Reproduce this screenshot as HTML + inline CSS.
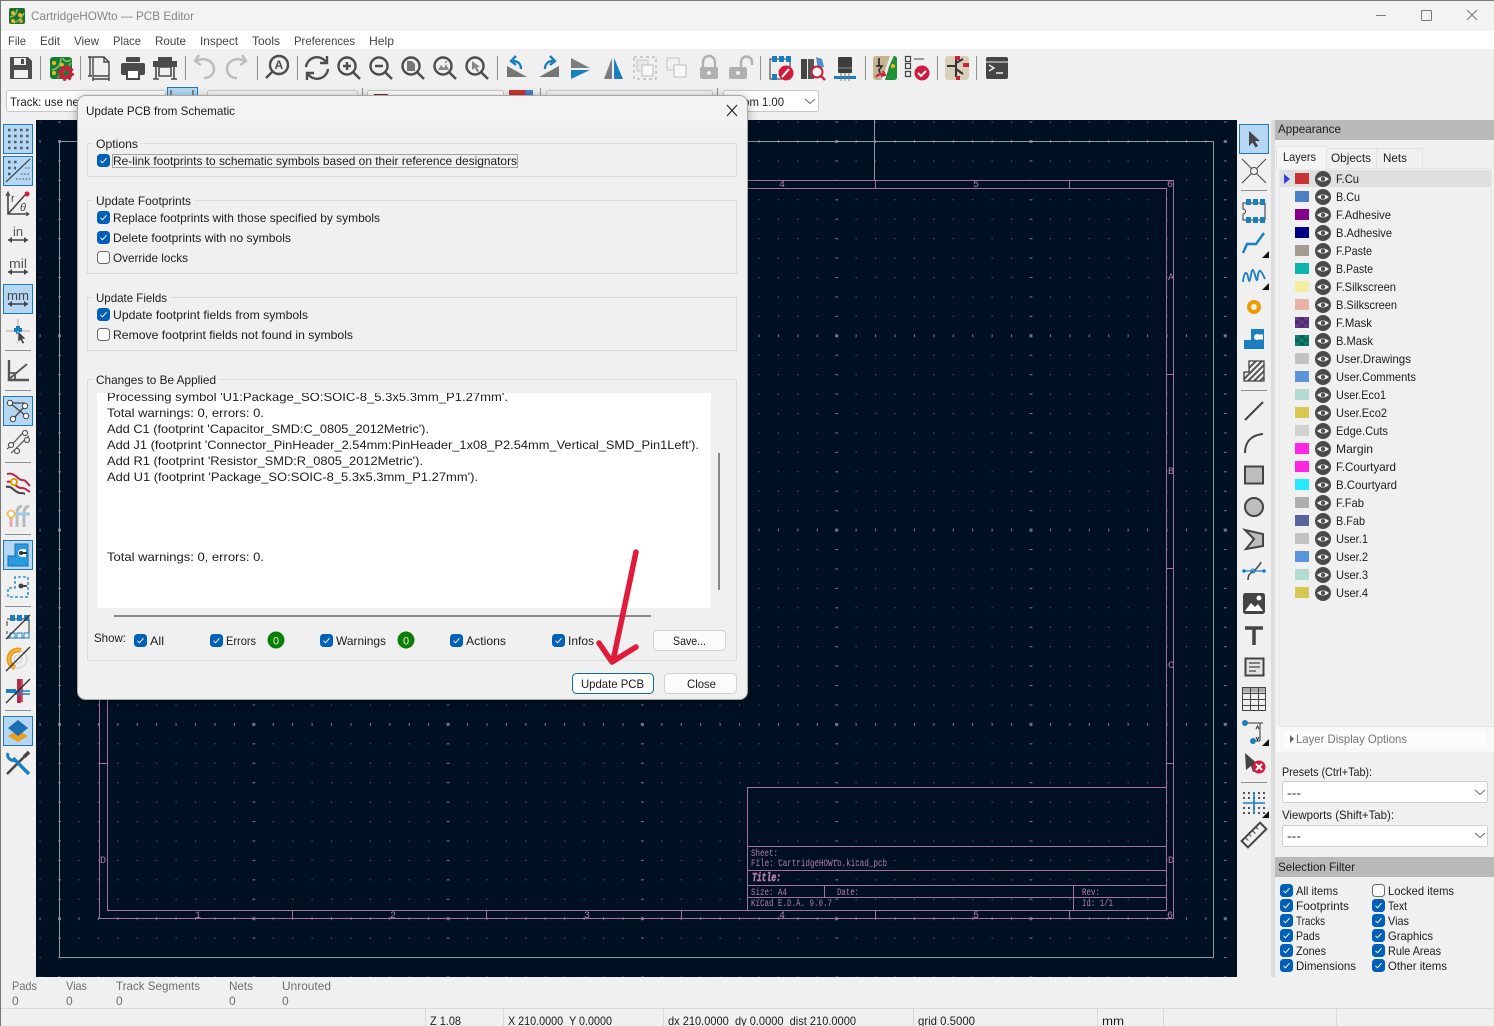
<!DOCTYPE html>
<html><head><meta charset="utf-8"><title>CartridgeHOWto — PCB Editor</title>
<style>
html,body{margin:0;padding:0;background:#f0f0f0;overflow:hidden}
svg{display:block}
text{font-family:"Liberation Sans",sans-serif;font-size:12px;fill:#1c1c1c}
.g{fill:#6e6e6e}
.m{font-family:"Liberation Mono",monospace;font-size:10px;fill:#b07fa8}
.d{fill:none;stroke:#4d4d4d;stroke-width:2.4}
.b{fill:none;stroke:#1a7fc1;stroke-width:2.4}
.a{fill:#b5d7f3;stroke:#1f77b4}
.s{stroke:#8f8f8f;stroke-width:1}
</style></head><body>
<svg width="1494" height="1026" viewBox="0 0 1494 1026" xmlns="http://www.w3.org/2000/svg">
<defs>
<pattern id="p0" x="20.14" y="121.57" width="19.43" height="19.43" patternUnits="userSpaceOnUse"><rect width="1" height="1" fill="#6b7583"/></pattern>
<pattern id="p1" x="58" y="121.57" width="194.3" height="19.43" patternUnits="userSpaceOnUse"><rect width="3" height="1" fill="#6b7583"/></pattern>
<pattern id="p2" x="20.14" y="140" width="19.43" height="194.3" patternUnits="userSpaceOnUse"><rect width="1" height="3" fill="#6b7583"/></pattern>
<pattern id="p3" x="58" y="140" width="194.3" height="194.3" patternUnits="userSpaceOnUse"><rect width="3" height="3" fill="#6b7583"/></pattern>
<pattern id="fm" x="1295" y="317" width="9" height="7" patternUnits="userSpaceOnUse"><rect width="9" height="7" fill="#4d2a70"/><rect width="4.500" height="3.500" fill="#633c8a"/><rect x="4.500" y="3.500" width="4.500" height="3.500" fill="#633c8a"/></pattern>
<pattern id="bm" x="1295" y="335" width="9" height="7" patternUnits="userSpaceOnUse"><rect width="9" height="7" fill="#0a6258"/><rect width="4.500" height="3.500" fill="#0f7d6e"/><rect x="4.500" y="3.500" width="4.500" height="3.500" fill="#0f7d6e"/></pattern>
<g id="cb"><rect x=".5" y=".5" width="12" height="12" rx="3" fill="#005fb8" stroke="#005fb8"/><path d="M3.5 6.8l2 2 4-4.6" fill="none" stroke="#fff"/></g>
<g id="cu"><rect x=".5" y=".5" width="12" height="12" rx="3" fill="#fbfbfb" stroke="#6a6a6a"/></g>
<g id="eye"><circle r="8" fill="#4a4a4a"/><path d="M-6 0Q0-5 6 0Q0 5-6 0z" fill="#eee"/><circle r="2" fill="#4a4a4a"/></g>
<g id="chev"><path d="M0 0l5 4.5 5-4.500" fill="none" stroke="#666"/></g>
<g id="tri"><path d="M0 7L7 0V7z" fill="#111"/></g>
<filter id="sh" x="-5%" y="-5%" width="110%" height="110%"><feDropShadow dx="0" dy="2" stdDeviation="5" flood-color="#000" flood-opacity=".35"/></filter>
<clipPath id="cv"><rect x="36" y="120" width="1201" height="857"/></clipPath>
<clipPath id="lg"><rect x="97" y="393" width="614" height="215"/></clipPath>
</defs>

<rect width="1494" height="1026" fill="#f0f0f0"/>
<rect width="1494" height="31" fill="#f3f3f3"/>
<rect y="31" width="1494" height="18" fill="#fff"/>
<rect width="1494" height="1" fill="#777"/>
<rect width="1" height="1026" fill="#777"/>

<!-- title -->
<g transform="translate(9,8)"><rect width="16" height="16" rx="2" fill="#1d6f30"/><path d="M1 9C6 8 8 5 8 1M5 15C9 13 13 10 15 5" fill="none" stroke="#7fc06a" stroke-width="1.5"/><circle cx="4" cy="5" r="2" fill="#e8b820"/><circle cx="4" cy="13" r="2" fill="#e8b820"/><circle cx="11" cy="7" r="2" fill="#e8b820"/><circle cx="12" cy="13" r="2" fill="#d8a020"/></g>
<text x="31" y="20" style="fill:#858585" textLength="163" lengthAdjust="spacingAndGlyphs">CartridgeHOWto — PCB Editor</text>
<path d="M1376 15.5h10" stroke="#777"/><rect x="1421.500" y="10.500" width="10" height="10" rx="1" fill="none" stroke="#777"/><path d="M1467 10l10 10M1477 10l-10 10" stroke="#777"/>

<!-- menu -->
<g>
<text x="8" y="45" textLength="18" lengthAdjust="spacingAndGlyphs" style="fill:#444">File</text>
<text x="40" y="45" textLength="20" lengthAdjust="spacingAndGlyphs" style="fill:#444">Edit</text>
<text x="74" y="45" textLength="25" lengthAdjust="spacingAndGlyphs" style="fill:#444">View</text>
<text x="113" y="45" textLength="28" lengthAdjust="spacingAndGlyphs" style="fill:#444">Place</text>
<text x="155" y="45" textLength="31" lengthAdjust="spacingAndGlyphs" style="fill:#444">Route</text>
<text x="200" y="45" textLength="38" lengthAdjust="spacingAndGlyphs" style="fill:#444">Inspect</text>
<text x="252" y="45" textLength="28" lengthAdjust="spacingAndGlyphs" style="fill:#444">Tools</text>
<text x="294" y="45" textLength="61" lengthAdjust="spacingAndGlyphs" style="fill:#444">Preferences</text>
<text x="369" y="45" textLength="25" lengthAdjust="spacingAndGlyphs" style="fill:#444">Help</text>
</g>

<!-- top toolbar separators -->
<path class="s" d="M40.500 56v24M80.500 56v24M185.500 56v24M257.500 56v24M297.500 56v24M497.500 56v24M760.500 56v24M865.500 56v24M937.500 56v24M976.500 56v24"/>

<!-- top toolbar icons -->
<g transform="translate(21,68)"><path d="M-11-11h18l4 4v18h-22z" fill="#4d4d4d"/><rect x="-7" y="-10" width="12" height="7" fill="#f0f0f0"/><rect x="0" y="-9" width="3" height="5" fill="#4d4d4d"/><rect x="-7" y="2" width="14" height="8" fill="#f0f0f0"/></g>
<g transform="translate(61,68)"><rect x="-11" y="-11" width="22" height="22" rx="3" fill="#1d7a33"/><path d="M-9 2C-3 1 0-4 0-10M-3 10C0 5 6 0 10-5M2-10C3-6 6-6 10-8" fill="none" stroke="#7fc06a" stroke-width="1.6"/><circle cx="-7" cy="-5" r="2" fill="#e8c020"/><circle cx="-7" cy="5" r="2" fill="#e8c020"/><circle cx="1" cy="-3" r="2" fill="#e8c020"/><circle cx="5" cy="5" r="4.5" fill="none" stroke="#c9203c" stroke-width="3.5"/><circle cx="5" cy="5" r="7" fill="none" stroke="#c9203c" stroke-width="2" stroke-dasharray="3 2.500"/></g>
<g transform="translate(99,68)" fill="none" stroke="#444" stroke-width="1.4"><path d="M-6-11h11l5 5v14h-16zM5-11v5h5M-9-11v19M-11-11h4M-11 8h4M-6 11h16M-6 9v4M10 9v4"/></g>
<g transform="translate(133,68)"><rect x="-12" y="-5" width="24" height="12" rx="2" fill="#4a4a4a"/><rect x="-7" y="-11" width="14" height="5" rx="1" fill="#4a4a4a"/><path d="M-6 2h12v9h-12z" fill="#fff" stroke="#4a4a4a" stroke-width="2"/></g>
<g transform="translate(165,68)"><rect x="-12" y="-7" width="24" height="6" fill="#4a4a4a"/><rect x="-7" y="-11" width="14" height="4" fill="#4a4a4a"/><path d="M-6-1h12v9h-12zM-9-1v12M9-1v12M-12 11h6M6 11h6" fill="#f0f0f0" stroke="#4a4a4a" stroke-width="1.6"/></g>
<g transform="translate(204,68)" fill="none" stroke="#bdbdbd" stroke-width="2.500"><path d="M-8-7C2-12 10-6 10 1C10 7 5 10 0 10"/><path d="M-5-13L-9-7L-3-3"/></g>
<g transform="translate(237,68) scale(-1,1)" fill="none" stroke="#bdbdbd" stroke-width="2.500"><path d="M-8-7C2-12 10-6 10 1C10 7 5 10 0 10"/><path d="M-5-13L-9-7L-3-3"/></g>
<g transform="translate(277,68)"><circle cx="2" cy="-3" r="9" class="d"/><path class="d" d="M-4 3L-11 10"/><text x="-2.500" y="1" style="font-size:12px;font-weight:bold;fill:#4d4d4d">A</text></g>
<g transform="translate(317,68)" class="d"><path d="M-11-1A11 11 0 0 1 9-6"/><path d="M10-12v7h-7"/><path d="M11 1A11 11 0 0 1-9 6"/><path d="M-10 12v-7h7"/></g>
<g transform="translate(349,68)" class="d"><circle cx="-2" cy="-2" r="8.500"/><path d="M4 4l7 7M-6-2h8M-2-6v8"/></g>
<g transform="translate(381,68)" class="d"><circle cx="-2" cy="-2" r="8.500"/><path d="M4 4l7 7M-6-2h8"/></g>
<g transform="translate(413,68)"><circle cx="-2" cy="-2" r="8.500" class="d"/><path class="d" d="M4 4l7 7"/><path d="M-6-7h5l3 3v7h-8z" fill="#777"/></g>
<g transform="translate(445,68)"><circle cx="-2" cy="-2" r="8.500" class="d"/><path class="d" d="M4 4l7 7"/><path d="M-7 2l3-5 3 3 2-4 3 6z" fill="#888"/><circle cx="1" cy="-6" r="1" fill="#888"/></g>
<g transform="translate(477,68)"><circle cx="-2" cy="-2" r="8.500" class="d"/><path class="d" d="M4 4l7 7"/><path d="M-5-7l8 6h-3l2 4-2 1-2-4-3 2z" fill="#888"/></g>
<g transform="translate(517,68)"><path d="M-10 9L10 9L-10-2z" fill="#757575"/><path class="b" d="M4 1C4-5 0-7-4-7M-1-12L-6-7L-1-3"/></g>
<g transform="translate(549,68)"><path d="M10 9L-10 9L10-2z" fill="#757575"/><path class="b" d="M-4 1C-4-5 0-7 4-7M1-12L6-7L1-3"/></g>
<g transform="translate(580,68)"><path d="M-9-10L10 0L-9 0z" fill="#7d7d7d"/><path d="M-9 2L10 2L-9 11z" fill="#1a7fc1"/></g>
<g transform="translate(613,68)"><path d="M-9 11L-1 11L-1-10z" fill="#7d7d7d"/><path d="M1-10L1 11L10 11z" fill="#1a7fc1"/></g>
<g transform="translate(645,68)" fill="none"><rect x="-11" y="-11" width="22" height="22" stroke="#bdbdbd" stroke-width="1.500" stroke-dasharray="3 3"/><rect x="-8" y="-8" width="11" height="11" fill="#e8e8e8" stroke="#c4c4c4"/><rect x="-3" y="-3" width="11" height="11" fill="#f8f8f8" stroke="#bdbdbd"/></g>
<g transform="translate(677,68)" fill="none"><rect x="-10" y="-10" width="12" height="12" stroke="#c4c4c4"/><rect x="-3" y="-3" width="12" height="12" fill="#f8f8f8" stroke="#bdbdbd"/><path d="M-10-10h.1M2-10h.1M-10 2h.1M9 9h.1M9-3h.1M-3 9h.1" stroke="#bdbdbd" stroke-width="3"/></g>
<g transform="translate(709,68)"><rect x="-9" y="-1" width="18" height="12" rx="2" fill="#b0b0b0"/><path d="M-6-1v-5a6 6 0 0 1 12 0v5" fill="none" stroke="#b0b0b0" stroke-width="2.400"/><circle cy="5" r="2" fill="#f0f0f0"/></g>
<g transform="translate(741,68)"><rect x="-12" y="-1" width="18" height="12" rx="2" fill="#b0b0b0"/><path d="M0-1v-5a5.500 5.500 0 0 1 11 0v3" fill="none" stroke="#b0b0b0" stroke-width="2.400"/><circle cx="-3" cy="5" r="2" fill="#f0f0f0"/></g>
<g transform="translate(781,68)"><path d="M-11-9h20v20h-20zM-11-2v4" fill="none" stroke="#333"/><rect x="-9" y="-12" width="5" height="6" fill="#1a7fc1"/><rect x="-2" y="-12" width="5" height="6" fill="#1a7fc1"/><rect x="5" y="-12" width="5" height="6" fill="#1a7fc1"/><rect x="-9" y="6" width="5" height="6" fill="#1a7fc1"/><circle cx="5" cy="5" r="7.500" fill="#d01c3c"/><path d="M1 9l7-8" stroke="#fff" stroke-width="2"/></g>
<g transform="translate(813,68)"><rect x="-12" y="-9" width="6" height="20" fill="#444"/><rect x="-5" y="-9" width="6" height="20" fill="#555"/><path d="M3-11l6 2 2 8-6 2z" fill="#4a8fd0"/><circle cx="4" cy="4" r="5.500" fill="#f8f8f8" stroke="#c9203c" stroke-width="2"/><path d="M8 8l4 4" stroke="#c9203c" stroke-width="2.400"/></g>
<g transform="translate(845,68)"><rect x="-7" y="-11" width="14" height="16" rx="1" fill="#3d3d3d"/><rect x="-7" y="-1" width="14" height="2" fill="#666"/><rect x="-11" y="8" width="22" height="3" fill="#1a7fc1"/><path d="M-4 5v8M0 5v8M4 5v8" stroke="#777"/></g>
<g transform="translate(885,68)"><path d="M-12-9q0-3 3-3h14L-3 12h-6q-3 0-3-3z" fill="#c6b592"/><path d="M7-12h2q3 0 3 3V9q0 3-3 3H0z" fill="#229135"/><path d="M-6-10v8M-9-2h6l-3 4 1 3" fill="none" stroke="#333" stroke-width="1.800"/><path d="M8-12L-3 12" stroke="#eee" stroke-width="1.500"/><circle cx="8" cy="-2" r="2" fill="#e8c020"/><path d="M-9 9a6 5 0 0 1 9-2M-2 3l2 4-4 1" fill="none" stroke="#c9203c" stroke-width="2"/></g>
<g transform="translate(917,68)"><path d="M-11.500-11.500h5v5h-5zM-11.500-4.500h5v5h-5zM-11.500 3.500h5v5h-5z" fill="none" stroke="#444" stroke-width="1.200"/><path d="M-3-9h10" stroke="#444"/><circle cx="5" cy="5" r="7.500" fill="#d01c3c"/><path d="M1 5l3 3 5-5" fill="none" stroke="#fff" stroke-width="2"/></g>
<g transform="translate(957,68)"><rect x="-12" y="-12" width="24" height="24" rx="3" fill="#d8cfb8"/><path d="M-1-9V9M-1-2L-10-2M-1-5L6-9M-1 1L6 6" stroke="#333" stroke-width="2" fill="none"/><rect x="-2" y="-12" width="5" height="4" fill="#c9203c"/><rect x="6" y="-5" width="6" height="4" fill="#c9203c"/><rect x="-1" y="8" width="4" height="4" fill="#c9203c"/></g>
<g transform="translate(997,68)"><rect x="-11" y="-11" width="22" height="22" rx="2" fill="#454545"/><path d="M-11-6h22" stroke="#f0f0f0"/><path d="M-7-8.500h.1M-4.500-8.500h.1M-2-8.500h.1" stroke="#f0f0f0" stroke-width="1.500"/><path d="M-8-3l5 3-5 3M-1 5h7" fill="none" stroke="#f0f0f0" stroke-width="1.400"/></g>

<!-- aux toolbar -->
<rect x="6.500" y="90.500" width="159" height="21" rx="2" fill="#fff" stroke="#c8c8c8"/>
<text x="10" y="106" textLength="128" lengthAdjust="spacingAndGlyphs">Track: use netclass width</text>
<rect x="167.500" y="87.500" width="30" height="26" class="a"/>
<path d="M171 90v6M193 90v6" stroke="#333"/>
<rect x="207.500" y="90.500" width="150" height="21" rx="2" fill="#f5f5f5" stroke="#c8c8c8"/>
<path class="s" d="M362.500 88v24"/>
<rect x="367.500" y="90.500" width="136" height="21" rx="2" fill="#fff" stroke="#c8c8c8"/>
<rect x="374" y="94" width="14" height="12" fill="#7a3030"/>
<rect x="509" y="90" width="24" height="20" fill="#c83434"/><path d="M526 90h7v20h-13z" fill="#4d7fc4"/>
<path class="s" d="M540.500 88v24"/>
<rect x="546.500" y="90.500" width="166" height="21" rx="2" fill="#f5f5f5" stroke="#c8c8c8"/>
<path class="s" d="M717.500 88v24"/>
<rect x="723.500" y="90.500" width="95" height="21" rx="2" fill="#fff" stroke="#c8c8c8"/>
<text x="730" y="106" textLength="54" lengthAdjust="spacingAndGlyphs">Zoom 1.00</text>
<use href="#chev" x="805" y="99"/>

<!-- canvas -->
<g clip-path="url(#cv)" shape-rendering="crispEdges">
<rect x="36" y="120" width="1201" height="857" fill="#001023"/>
<rect x="36" y="120" width="1201" height="857" fill="url(#p0)"/>
<rect x="36" y="120" width="1201" height="857" fill="url(#p1)"/>
<rect x="36" y="120" width="1201" height="857" fill="url(#p2)"/>
<rect x="36" y="120" width="1201" height="857" fill="url(#p3)"/>
<g fill="none" stroke="#8c979e">
<rect x="59.500" y="141.500" width="1154" height="816"/>
<path d="M874.500 120v60"/>
</g>
<g fill="none" stroke="#a8709f">
<rect x="99.500" y="180.500" width="1074" height="738"/>
<rect x="107.500" y="188.500" width="1059" height="722"/>
<path d="M875.500 180v8M1069.500 180v8M292.500 911v8M486.500 911v8M681.500 911v8M875.500 911v8M1069.500 911v8M99 374.500h8M99 568.500h8M99 763.500h8M1167 374.500h7M1167 568.500h7M1167 763.500h7"/>
<path d="M747.500 787v124M747 787.500h420M747 846.500h420M747 870.500h420M747 885.500h420M747 897.500h420M824.500 885v12M1073.500 885v26"/>
</g>
</g>
<text class="m" x="779" y="187">4</text><text class="m" x="973" y="187">5</text><text class="m" x="1167" y="187">6</text>
<text class="m" x="195" y="918">1</text><text class="m" x="390" y="918">2</text><text class="m" x="584" y="918">3</text><text class="m" x="779" y="918">4</text><text class="m" x="973" y="918">5</text><text class="m" x="1167" y="918">6</text>
<text class="m" x="1168" y="280">A</text><text class="m" x="1168" y="474">B</text><text class="m" x="1168" y="668">C</text><text class="m" x="1168" y="863">D</text><text class="m" x="100" y="863">D</text>
<text class="m" x="751" y="856" textLength="27" lengthAdjust="spacingAndGlyphs">Sheet:</text>
<text class="m" x="751" y="866" textLength="136" lengthAdjust="spacingAndGlyphs">File: CartridgeHOWto.kicad_pcb</text>
<text class="m" x="752" y="881" textLength="29" lengthAdjust="spacingAndGlyphs" style="font-weight:bold;font-style:italic;font-size:12px;stroke:#b07fa8;stroke-width:.6">Title:</text>
<text class="m" x="751" y="895" textLength="36" lengthAdjust="spacingAndGlyphs">Size: A4</text>
<text class="m" x="837" y="895" textLength="22" lengthAdjust="spacingAndGlyphs">Date:</text>
<text class="m" x="1082" y="895" textLength="18" lengthAdjust="spacingAndGlyphs">Rev:</text>
<text class="m" x="751" y="906" textLength="81" lengthAdjust="spacingAndGlyphs">KiCad E.D.A. 9.0.7</text>
<text class="m" x="1082" y="906" textLength="31" lengthAdjust="spacingAndGlyphs">Id: 1/1</text>

<!-- left toolbar -->
<path class="s" d="M5 350.500h26M5 390.500h26M5 462.500h26M5 534.500h26M5 606.500h26M5 710.500h26"/>
<rect x="3.500" y="124.500" width="29" height="29" class="a"/>
<rect x="3.500" y="156.500" width="29" height="29" class="a"/>
<rect x="3.500" y="284.500" width="29" height="29" class="a"/>
<rect x="3.500" y="396.500" width="29" height="29" class="a"/>
<rect x="3.500" y="540.500" width="29" height="29" class="a"/>
<rect x="3.500" y="716.500" width="29" height="29" class="a"/>
<g transform="translate(18,139)" stroke="#4d5d6b" stroke-width="2.600" stroke-dasharray="2.600 3.400" fill="none"><path d="M-10-9h22M-10-3h22M-10 3h22M-10 9h22"/></g>
<g transform="translate(18,171)" fill="none"><path d="M-10-9h12M-10-3h8M-10 3h3" stroke="#4d5d6b" stroke-width="2.600" stroke-dasharray="2.600 3.400"/><path d="M7-3h5M3 3h9M-2 8h14" stroke="#6a7a88" stroke-width="1.600" stroke-dasharray="1.600 1.600"/><path d="M-12 11L12-12" stroke="#333" stroke-width="1.200"/></g>
<g transform="translate(18,203)"><path d="M-10-10v21h21M-10 11L7-8" fill="none" stroke="#444" stroke-width="1.600"/><path d="M-12-7l2-4 2 4M8 9l3 2-3 2" fill="none" stroke="#444"/><circle cx="9" cy="-9" r="2.500" fill="#d01c3c"/><text x="-7" y="-1" style="font-size:11px;fill:#444">r</text><text x="2" y="8" style="font-size:11px;font-style:italic;fill:#444">θ</text></g>
<g transform="translate(18,235)"><text x="-5" y="1" style="font-size:13px;fill:#555">in</text><path d="M-10 5h20" stroke="#444" stroke-width="1.500"/><path d="M-10 5l4-3v6zM10 5l-4-3v6z" fill="#444"/></g>
<g transform="translate(18,267)"><text x="-9" y="1" textLength="18" lengthAdjust="spacingAndGlyphs" style="font-size:13px;fill:#555">mil</text><path d="M-10 5h20" stroke="#444" stroke-width="1.500"/><path d="M-10 5l4-3v6zM10 5l-4-3v6z" fill="#444"/></g>
<g transform="translate(18,299)"><text x="-11" y="1" textLength="22" lengthAdjust="spacingAndGlyphs" style="font-size:13px;fill:#444">mm</text><path d="M-10 5h20" stroke="#444" stroke-width="1.500"/><path d="M-10 5l4-3v6zM10 5l-4-3v6z" fill="#444"/></g>
<g transform="translate(18,331)"><path d="M-12 0H12M0-12V12" stroke="#aaa"/><path d="M-4-1h8M0-5v8" stroke="#1a7fc1" stroke-width="4"/><path d="M0 0l8 8h-3.500l2 4-2 1-2-4-2.500 2z" fill="#444" stroke="#fff" stroke-width=".5"/></g>
<g transform="translate(18,371)"><path d="M-9-11V9H11" fill="none" stroke="#555" stroke-width="2.400"/><path d="M-10 9L9-7M-9 2h6v7" fill="none" stroke="#555" stroke-width="1.800"/></g>
<g transform="translate(18,411)" fill="none" stroke="#444"><path d="M-8-8L8 5M8-6L-5 8M-6-8h13" stroke-width="1.300"/><circle cx="-8" cy="-8" r="2.700" fill="#fff"/><circle cx="8" cy="5" r="2.700" fill="#fff"/><circle cx="-5" cy="8" r="2.700" fill="#fff"/><circle cx="7" cy="-5" r="2.700" fill="#fff"/></g>
<g transform="translate(18,443)" fill="none" stroke="#555" stroke-width="1.200"><path d="M-11 6C-5 2 0-6 5-10M-7 10C-2 6 5-2 11-7"/><circle cx="-7" cy="2" r="2.500" fill="#fff"/><circle cx="7" cy="-10" r="2.500" fill="#fff"/><circle cx="9" cy="-3" r="2.500" fill="#fff"/><circle cx="-1" cy="8" r="2.500" fill="#fff"/></g>
<g transform="translate(18,483)" fill="none" stroke-width="2"><path d="M-11-9C-3-11 0-3 4-3S8-1 12 3" stroke="#b8284a"/><path d="M-11-1C-5-3-2 5 3 5S8 7 12 9" stroke="#b8284a"/><path d="M-12 4C-6 2-3 10 2 10S6 11 7 11" stroke="#444"/><circle cx="-4" cy="-1" r="3" stroke="#e89a10" fill="#fff"/></g>
<g transform="translate(18,515)" fill="none" stroke-width="3"><path d="M-7 12V2" stroke="#e6a8b0"/><path d="M-1 12V-2q0-6 5-7" stroke="#bbb"/><path d="M6 12V-2q0-6 5-7" stroke="#bbb"/><path d="M-6-1H12" stroke="#9ccae8"/><circle cx="-7" cy="-1" r="3.500" stroke="#f0bd60" stroke-width="2" fill="#fff"/></g>
<g transform="translate(18,555)"><path d="M-10 11V1h7V-11H10V11z" fill="#2a9adf" stroke="#1a6fa5" stroke-width="1"/><path d="M8-6H4a4 4 0 0 0 0 8h4z" fill="#f0f8ff"/><path d="M9-2H3" stroke="#333" stroke-width="2"/><circle cx="3" cy="-2" r="2" fill="#333"/></g>
<g transform="translate(18,587)" fill="none"><path d="M-10 10V1h7V-10H10V10z" stroke="#1a7fc1" stroke-width="1.300" stroke-dasharray="3 2"/><path d="M3-1h6" stroke="#444" stroke-width="2"/><circle cx="3" cy="-1" r="2.500" fill="#444"/></g>
<g transform="translate(18,627)"><path d="M-11-6v5M-11 7v-3M-11-8H11V11H-11" fill="none" stroke="#333"/><rect x="-8" y="-12" width="5" height="6" fill="#1a7fc1"/><rect x="-1" y="-12" width="5" height="6" fill="#1a7fc1"/><rect x="6" y="-12" width="5" height="6" fill="#1a7fc1"/><path d="M-8 6h5v5h-5zM-1 6h5v5h-5zM6 6h5v5h-5z" fill="#f0f0f0" stroke="#1a7fc1"/><path d="M-12 12L12-12" stroke="#333" stroke-width="1.300"/></g>
<g transform="translate(18,659)" fill="none"><circle r="9" stroke="#f09c00" stroke-width="5" stroke-dasharray="28 28" transform="rotate(110)"/><circle r="9" stroke="#ccc" stroke-width="1"/><circle r="4" stroke="#ccc"/><path d="M-12 12L12-12" stroke="#333" stroke-width="1.300"/></g>
<g transform="translate(18,691)"><path d="M4-12V11" stroke="#c9203c" stroke-width="1.500"/><rect x="-1" y="-12" width="4" height="24" fill="#b8284a"/><path d="M-4 0H12M-4 3H12" stroke="#1a7fc1" stroke-width="1.500"/><rect x="-12" y="-2" width="10" height="4" fill="#1a7fc1"/><path d="M-12 12L12-12" stroke="#333" stroke-width="1.300"/></g>
<g transform="translate(18,731)"><path d="M0-1L10 5 0 11-10 5z" fill="#e8a020"/><path d="M0-11L10-3 0 5-10-3z" fill="#1a6fb0"/></g>
<g transform="translate(18,763)"><path d="M-11 11L6-6" stroke="#444" stroke-width="2.500"/><path d="M6-6l5-5" stroke="#444" stroke-width="3.500"/><path d="M11 11L-5-5" stroke="#1a7fc1" stroke-width="3.500"/><path d="M-10-10a5.500 5.500 0 0 0 7 7" fill="none" stroke="#1a7fc1" stroke-width="3"/></g>

<!-- right toolbar -->
<path class="s" d="M1241 190.500h26M1241 390.500h26M1241 782.500h26"/>
<rect x="1239.500" y="124.500" width="29" height="29" class="a"/>
<g transform="translate(1254,139)"><path d="M-5-8L6 2H1l3 5-2.500 1.500-3-5L-5 7z" fill="#444"/></g>
<g transform="translate(1254,171)" fill="none" stroke="#444"><path d="M-12-12L12 12M12-12L-12 12"/><circle r="3.500" fill="#f0f0f0"/></g>
<g transform="translate(1254,211)"><path d="M-11-8H11V9H-11V3a2 2 0 0 0 0-5z" fill="none" stroke="#333"/><path d="M-8-12h5v6h-5zM-1-12h5v6h-5zM6-12h5v6h-5zM-8 6h5v6h-5zM-1 6h5v6h-5zM6 6h5v6h-5z" fill="#1a7fc1"/></g>
<g transform="translate(1254,243)"><path d="M-11 10l4-9h9l8-11" class="b"/></g><use href="#tri" x="1262" y="251"/>
<g transform="translate(1254,275)"><path d="M-11 7C-10-4-7-4-6 2S-4 7-3 0-1-7 1 0 3 7 4 0 7-5 11 4" fill="none" stroke="#1a7fc1" stroke-width="1.800"/></g><use href="#tri" x="1262" y="283"/>
<g transform="translate(1254,307)"><circle r="5" fill="none" stroke="#f09c00" stroke-width="4"/></g>
<g transform="translate(1254,339)"><path d="M-10 10V1h7V-10H10V10z" fill="#1a7fc1"/><path d="M9-2H3" stroke="#fff" stroke-width="5"/><circle cx="3" cy="-2" r="3" fill="#fff"/></g>
<g transform="translate(1254,371)"><clipPath id="zc"><path d="M-10 10V1h5V-10H10V10z"/></clipPath><g clip-path="url(#zc)"><path d="M-12 4L4-12M-12 10L10-12M-7 11L12-8M-1 11L12-2M5 11L12 4" stroke="#555" stroke-width="2"/></g><path d="M-10 10V1h5V-10H10V10z" fill="none" stroke="#444" stroke-width="1.300"/></g>
<g transform="translate(1254,411)"><path d="M-9 9L9-9" stroke="#444" stroke-width="2"/></g>
<g transform="translate(1254,443)"><path d="M-9 10C-9-1-3-8 9-9" fill="none" stroke="#444" stroke-width="2"/></g>
<rect x="1245" y="466.500" width="18" height="17" fill="#bdbdbd" stroke="#444" stroke-width="2"/>
<circle cx="1254" cy="507" r="9" fill="#bdbdbd" stroke="#444" stroke-width="2"/>
<path d="M1245 530L1263 534V546L1246 549L1254 539z" fill="#bdbdbd" stroke="#444" stroke-width="2"/>
<g transform="translate(1254,571)"><path d="M-6 9C-6 1-1 2 2-2S6-6 7-9" fill="none" stroke="#444" stroke-width="1.500"/><path d="M-11 0H11" stroke="#1a7fc1" stroke-width="1.200"/><circle cx="-10" cy="0" r="1.800" fill="#1a7fc1"/><circle cx="10" cy="0" r="1.800" fill="#1a7fc1"/><circle cx="-1" cy="0" r="2" fill="none" stroke="#1a7fc1"/></g>
<g transform="translate(1254,603)"><rect x="-11" y="-10" width="22" height="21" rx="2.500" fill="#444"/><path d="M-9 8l6-8 4 4 3-3 5 7z" fill="#fff"/><circle cx="5" cy="-5" r="2.500" fill="#fff"/></g>
<path d="M1245 628h18M1254 627v18" stroke="#444" stroke-width="3.500" fill="none"/>
<g transform="translate(1254,667)" fill="none" stroke="#444"><rect x="-8.500" y="-8.500" width="18" height="17" fill="#e4e4e4" stroke-width="2"/><path d="M-5-4H6M-5 0H6M-5 4H2" stroke-width="1.200"/></g>
<g transform="translate(1254,699)"><rect x="-11.500" y="-11.500" width="23" height="5" fill="#ababab"/><path d="M-11.500-11.500h23v23h-23zM-11.500-5.500h23M-11.500.5h23M-11.500 6.500h23M-3.500-11.500v23M4.500-11.500v23" fill="none" stroke="#444"/></g>
<g transform="translate(1254,732)"><path d="M-8-9H9M6-9V9M-2 9h8" fill="none" stroke="#333"/><circle cx="-9" cy="-9" r="3" fill="#1a7fc1"/><circle cx="-1" cy="9" r="3" fill="#1a7fc1"/><path d="M2-3l1.500-3 1.500 3M2 5l1.500 3 1.500-3" fill="none" stroke="#333"/></g><use href="#tri" x="1262" y="739"/>
<g transform="translate(1254,763)"><path d="M-9-10L5 2H-1l3 6-3 1-2-6-5 4z" fill="#444"/><circle cx="5" cy="4" r="6.500" fill="#d01c3c"/><path d="M2 1l6 6M8 1l-6 6" stroke="#fff" stroke-width="2"/></g>
<g transform="translate(1254,803)"><path d="M-11-10h22M-11-5h22M-11 5h22M-11 10h22" stroke="#555" stroke-width="2" stroke-dasharray="2 3" fill="none"/><path d="M-11 0H11M0-11V11" stroke="#1a7fc1" stroke-width="1.600"/></g><use href="#tri" x="1262" y="811"/>
<g transform="translate(1254,835) rotate(-45)"><rect x="-13" y="-4.500" width="26" height="9" fill="none" stroke="#444" stroke-width="2"/><path d="M-8-4v4M-3-4v3M2-4v4M7-4v3" stroke="#444"/></g>

<!-- appearance panel -->
<rect x="1271" y="120" width="4" height="857" fill="#dcdcdc"/>
<rect x="1275" y="120" width="219" height="20" fill="#b9b9b9"/>
<text x="1278" y="133" textLength="63" lengthAdjust="spacingAndGlyphs">Appearance</text>
<rect x="1326.500" y="148.500" width="50" height="20" fill="#f0f0f0" stroke="#e4e4e4"/>
<rect x="1376.500" y="148.500" width="46" height="20" fill="#f0f0f0" stroke="#e4e4e4"/>
<rect x="1279.500" y="168.500" width="212" height="558" fill="#f0f0f0" stroke="#e6e6e6"/>
<rect x="1276.500" y="146.500" width="50" height="22.500" fill="#f4f4f4" stroke="#e4e4e4"/>
<rect x="1277" y="168" width="49" height="2" fill="#f0f0f0"/>
<text x="1283" y="161" textLength="33" lengthAdjust="spacingAndGlyphs">Layers</text>
<text x="1331" y="162" textLength="40" lengthAdjust="spacingAndGlyphs">Objects</text>
<text x="1383" y="162" textLength="24" lengthAdjust="spacingAndGlyphs">Nets</text>
<rect x="1280" y="170" width="211" height="17" fill="#dfdfdf"/>
<path d="M1284 174l6 5-6 5z" fill="#3c3ce0"/>

<g>
<rect x="1295" y="173" width="14" height="11" fill="#c83434"/><use href="#eye" x="1323" y="179"/><text x="1336" y="183" textLength="23" lengthAdjust="spacingAndGlyphs">F.Cu</text>
<rect x="1295" y="191" width="14" height="11" fill="#4d7fc4"/><use href="#eye" x="1323" y="197"/><text x="1336" y="201" textLength="24" lengthAdjust="spacingAndGlyphs">B.Cu</text>
<rect x="1295" y="209" width="14" height="11" fill="#84008a"/><use href="#eye" x="1323" y="215"/><text x="1336" y="219" textLength="55" lengthAdjust="spacingAndGlyphs">F.Adhesive</text>
<rect x="1295" y="227" width="14" height="11" fill="#000084"/><use href="#eye" x="1323" y="233"/><text x="1336" y="237" textLength="56" lengthAdjust="spacingAndGlyphs">B.Adhesive</text>
<rect x="1295" y="245" width="14" height="11" fill="#a69b90"/><use href="#eye" x="1323" y="251"/><text x="1336" y="255" textLength="36" lengthAdjust="spacingAndGlyphs">F.Paste</text>
<rect x="1295" y="263" width="14" height="11" fill="#0fb5ad"/><use href="#eye" x="1323" y="269"/><text x="1336" y="273" textLength="37" lengthAdjust="spacingAndGlyphs">B.Paste</text>
<rect x="1295" y="281" width="14" height="11" fill="#f2eda1"/><use href="#eye" x="1323" y="287"/><text x="1336" y="291" textLength="60" lengthAdjust="spacingAndGlyphs">F.Silkscreen</text>
<rect x="1295" y="299" width="14" height="11" fill="#e8b2a7"/><use href="#eye" x="1323" y="305"/><text x="1336" y="309" textLength="61" lengthAdjust="spacingAndGlyphs">B.Silkscreen</text>
<rect x="1295" y="317" width="14" height="11" fill="url(#fm)"/><use href="#eye" x="1323" y="323"/><text x="1336" y="327" textLength="36" lengthAdjust="spacingAndGlyphs">F.Mask</text>
<rect x="1295" y="335" width="14" height="11" fill="url(#bm)"/><use href="#eye" x="1323" y="341"/><text x="1336" y="345" textLength="37" lengthAdjust="spacingAndGlyphs">B.Mask</text>
<rect x="1295" y="353" width="14" height="11" fill="#c2c2c2"/><use href="#eye" x="1323" y="359"/><text x="1336" y="363" textLength="75" lengthAdjust="spacingAndGlyphs">User.Drawings</text>
<rect x="1295" y="371" width="14" height="11" fill="#5994dc"/><use href="#eye" x="1323" y="377"/><text x="1336" y="381" textLength="80" lengthAdjust="spacingAndGlyphs">User.Comments</text>
<rect x="1295" y="389" width="14" height="11" fill="#b4dbd2"/><use href="#eye" x="1323" y="395"/><text x="1336" y="399" textLength="50" lengthAdjust="spacingAndGlyphs">User.Eco1</text>
<rect x="1295" y="407" width="14" height="11" fill="#d8c852"/><use href="#eye" x="1323" y="413"/><text x="1336" y="417" textLength="51" lengthAdjust="spacingAndGlyphs">User.Eco2</text>
<rect x="1295" y="425" width="14" height="11" fill="#d0d2cd"/><use href="#eye" x="1323" y="431"/><text x="1336" y="435" textLength="52" lengthAdjust="spacingAndGlyphs">Edge.Cuts</text>
<rect x="1295" y="443" width="14" height="11" fill="#ff26e2"/><use href="#eye" x="1323" y="449"/><text x="1336" y="453" textLength="37" lengthAdjust="spacingAndGlyphs">Margin</text>
<rect x="1295" y="461" width="14" height="11" fill="#ff26e2"/><use href="#eye" x="1323" y="467"/><text x="1336" y="471" textLength="60" lengthAdjust="spacingAndGlyphs">F.Courtyard</text>
<rect x="1295" y="479" width="14" height="11" fill="#26e9ff"/><use href="#eye" x="1323" y="485"/><text x="1336" y="489" textLength="61" lengthAdjust="spacingAndGlyphs">B.Courtyard</text>
<rect x="1295" y="497" width="14" height="11" fill="#afafaf"/><use href="#eye" x="1323" y="503"/><text x="1336" y="507" textLength="28" lengthAdjust="spacingAndGlyphs">F.Fab</text>
<rect x="1295" y="515" width="14" height="11" fill="#58659b"/><use href="#eye" x="1323" y="521"/><text x="1336" y="525" textLength="29" lengthAdjust="spacingAndGlyphs">B.Fab</text>
<rect x="1295" y="533" width="14" height="11" fill="#c2c2c2"/><use href="#eye" x="1323" y="539"/><text x="1336" y="543" textLength="32" lengthAdjust="spacingAndGlyphs">User.1</text>
<rect x="1295" y="551" width="14" height="11" fill="#5994dc"/><use href="#eye" x="1323" y="557"/><text x="1336" y="561" textLength="32" lengthAdjust="spacingAndGlyphs">User.2</text>
<rect x="1295" y="569" width="14" height="11" fill="#b4dbd2"/><use href="#eye" x="1323" y="575"/><text x="1336" y="579" textLength="32" lengthAdjust="spacingAndGlyphs">User.3</text>
<rect x="1295" y="587" width="14" height="11" fill="#d8c852"/><use href="#eye" x="1323" y="593"/><text x="1336" y="597" textLength="32" lengthAdjust="spacingAndGlyphs">User.4</text>
</g>

<rect x="1276" y="727" width="218" height="25" fill="#f8f8f8"/>
<rect x="1284" y="731" width="202" height="17" fill="#fcfcfc"/>
<path d="M1290 735l4 4-4 4z" fill="#666"/>
<text x="1296" y="743" textLength="111" lengthAdjust="spacingAndGlyphs" style="fill:#777">Layer Display Options</text>
<text x="1282" y="776" textLength="90" lengthAdjust="spacingAndGlyphs">Presets (Ctrl+Tab):</text>
<rect x="1282.500" y="781.500" width="205" height="21" rx="2" fill="#fff" stroke="#cfcfcf"/>
<text x="1287" y="797" textLength="14" lengthAdjust="spacingAndGlyphs">---</text>
<use href="#chev" x="1475" y="790"/>
<text x="1282" y="819" textLength="112" lengthAdjust="spacingAndGlyphs">Viewports (Shift+Tab):</text>
<rect x="1282.500" y="825.500" width="205" height="21" rx="2" fill="#fff" stroke="#cfcfcf"/>
<text x="1287" y="840" textLength="14" lengthAdjust="spacingAndGlyphs">---</text>
<use href="#chev" x="1475" y="833"/>
<rect x="1275" y="857" width="219" height="20" fill="#b9b9b9"/>
<text x="1278" y="871" textLength="77" lengthAdjust="spacingAndGlyphs">Selection Filter</text>

<use href="#cb" x="1280" y="884"/><text x="1296" y="895" textLength="42" lengthAdjust="spacingAndGlyphs">All items</text>
<use href="#cb" x="1280" y="899"/><text x="1296" y="910" textLength="53" lengthAdjust="spacingAndGlyphs">Footprints</text>
<use href="#cb" x="1280" y="914"/><text x="1296" y="925" textLength="29" lengthAdjust="spacingAndGlyphs">Tracks</text>
<use href="#cb" x="1280" y="929"/><text x="1296" y="940" textLength="24" lengthAdjust="spacingAndGlyphs">Pads</text>
<use href="#cb" x="1280" y="944"/><text x="1296" y="955" textLength="30" lengthAdjust="spacingAndGlyphs">Zones</text>
<use href="#cb" x="1280" y="959"/><text x="1296" y="970" textLength="60" lengthAdjust="spacingAndGlyphs">Dimensions</text>
<use href="#cu" x="1372" y="884"/><text x="1388" y="895" textLength="66" lengthAdjust="spacingAndGlyphs">Locked items</text>
<use href="#cb" x="1372" y="899"/><text x="1388" y="910" textLength="19" lengthAdjust="spacingAndGlyphs">Text</text>
<use href="#cb" x="1372" y="914"/><text x="1388" y="925" textLength="21" lengthAdjust="spacingAndGlyphs">Vias</text>
<use href="#cb" x="1372" y="929"/><text x="1388" y="940" textLength="45" lengthAdjust="spacingAndGlyphs">Graphics</text>
<use href="#cb" x="1372" y="944"/><text x="1388" y="955" textLength="53" lengthAdjust="spacingAndGlyphs">Rule Areas</text>
<use href="#cb" x="1372" y="959"/><text x="1388" y="970" textLength="59" lengthAdjust="spacingAndGlyphs">Other items</text>

<!-- bottom -->
<text x="12" y="990" class="g" textLength="25" lengthAdjust="spacingAndGlyphs">Pads</text>
<text x="66" y="990" class="g" textLength="21" lengthAdjust="spacingAndGlyphs">Vias</text>
<text x="116" y="990" class="g" textLength="84" lengthAdjust="spacingAndGlyphs">Track Segments</text>
<text x="229" y="990" class="g" textLength="24" lengthAdjust="spacingAndGlyphs">Nets</text>
<text x="282" y="990" class="g" textLength="49" lengthAdjust="spacingAndGlyphs">Unrouted</text>
<text x="12" y="1005" class="g">0</text><text x="66" y="1005" class="g">0</text><text x="116" y="1005" class="g">0</text><text x="229" y="1005" class="g">0</text><text x="282" y="1005" class="g">0</text>
<path d="M1 1008.500H1494" stroke="#d8d8d8"/>
<path d="M425.500 1009V1026M503.500 1009V1026M663.500 1009V1026M913.500 1009V1026M1097.500 1009V1026M1163.500 1009V1026M1336.500 1009V1026" stroke="#d8d8d8"/>
<text x="430" y="1025" textLength="31" lengthAdjust="spacingAndGlyphs">Z 1.08</text>
<text x="508" y="1025" textLength="104" lengthAdjust="spacingAndGlyphs">X 210.0000&#160;&#160;Y 0.0000</text>
<text x="668" y="1025" textLength="188" lengthAdjust="spacingAndGlyphs">dx 210.0000&#160;&#160;dy 0.0000&#160;&#160;dist 210.0000</text>
<text x="918" y="1025" textLength="57" lengthAdjust="spacingAndGlyphs">grid 0.5000</text>
<text x="1102" y="1025" textLength="22" lengthAdjust="spacingAndGlyphs">mm</text>

<!-- dialog -->
<rect x="77.500" y="95.500" width="670" height="604" rx="8" fill="#f0f0f0" stroke="#a8a8a8" filter="url(#sh)"/>
<path d="M78 127V104a8 8 0 0 1 8-8H739a8 8 0 0 1 8 8V127z" fill="#f3f3f3"/>
<text x="86" y="115" textLength="149" lengthAdjust="spacingAndGlyphs">Update PCB from Schematic</text>
<path d="M727 105l10 11M737 105l-10 11" stroke="#222" stroke-width="1.100"/>

<g fill="none" stroke="#dcdcdc">
<rect x="87.500" y="143.500" width="649" height="33"/>
<rect x="87.500" y="200.500" width="649" height="73"/>
<rect x="87.500" y="297.500" width="649" height="53"/>
<rect x="87.500" y="379.500" width="649" height="281"/>
</g>
<rect x="93" y="138" width="48" height="10" fill="#f0f0f0"/>
<rect x="93" y="195" width="101" height="10" fill="#f0f0f0"/>
<rect x="93" y="292" width="77" height="10" fill="#f0f0f0"/>
<rect x="93" y="374" width="126" height="10" fill="#f0f0f0"/>
<text x="96" y="148" textLength="42" lengthAdjust="spacingAndGlyphs">Options</text>
<text x="96" y="205" textLength="95" lengthAdjust="spacingAndGlyphs">Update Footprints</text>
<text x="96" y="302" textLength="71" lengthAdjust="spacingAndGlyphs">Update Fields</text>
<text x="96" y="384" textLength="120" lengthAdjust="spacingAndGlyphs">Changes to Be Applied</text>

<use href="#cb" x="97" y="154"/>
<rect x="112.500" y="154.500" width="405" height="13" fill="none" stroke="#555" stroke-dasharray="1 1" shape-rendering="crispEdges"/>
<text x="113" y="165" textLength="404" lengthAdjust="spacingAndGlyphs">Re-link footprints to schematic symbols based on their reference designators</text>
<use href="#cb" x="97" y="211"/><text x="113" y="222" textLength="267" lengthAdjust="spacingAndGlyphs">Replace footprints with those specified by symbols</text>
<use href="#cb" x="97" y="231"/><text x="113" y="242" textLength="178" lengthAdjust="spacingAndGlyphs">Delete footprints with no symbols</text>
<use href="#cu" x="97" y="251"/><text x="113" y="262" textLength="75" lengthAdjust="spacingAndGlyphs">Override locks</text>
<use href="#cb" x="97" y="308"/><text x="113" y="319" textLength="195" lengthAdjust="spacingAndGlyphs">Update footprint fields from symbols</text>
<use href="#cu" x="97" y="328"/><text x="113" y="339" textLength="240" lengthAdjust="spacingAndGlyphs">Remove footprint fields not found in symbols</text>

<rect x="97" y="393" width="614" height="215" fill="#fff"/>
<g clip-path="url(#lg)">
<text x="107" y="401" textLength="401" lengthAdjust="spacingAndGlyphs">Processing symbol 'U1:Package_SO:SOIC-8_5.3x5.3mm_P1.27mm'.</text>
<text x="107" y="417" textLength="157" lengthAdjust="spacingAndGlyphs">Total warnings: 0, errors: 0.</text>
<text x="107" y="433" textLength="322" lengthAdjust="spacingAndGlyphs">Add C1 (footprint 'Capacitor_SMD:C_0805_2012Metric').</text>
<text x="107" y="449" textLength="592" lengthAdjust="spacingAndGlyphs">Add J1 (footprint 'Connector_PinHeader_2.54mm:PinHeader_1x08_P2.54mm_Vertical_SMD_Pin1Left').</text>
<text x="107" y="465" textLength="316" lengthAdjust="spacingAndGlyphs">Add R1 (footprint 'Resistor_SMD:R_0805_2012Metric').</text>
<text x="107" y="481" textLength="371" lengthAdjust="spacingAndGlyphs">Add U1 (footprint 'Package_SO:SOIC-8_5.3x5.3mm_P1.27mm').</text>
<text x="107" y="561" textLength="157" lengthAdjust="spacingAndGlyphs">Total warnings: 0, errors: 0.</text>
</g>
<rect x="718" y="453" width="2" height="137" fill="#8a8a8a"/>
<rect x="114" y="615" width="537" height="2" fill="#8a8a8a"/>

<text x="94" y="642" textLength="32" lengthAdjust="spacingAndGlyphs">Show:</text>
<use href="#cb" x="134" y="634"/><text x="150" y="645" textLength="14" lengthAdjust="spacingAndGlyphs">All</text>
<use href="#cb" x="210" y="634"/><text x="226" y="645" textLength="30" lengthAdjust="spacingAndGlyphs">Errors</text>
<circle cx="276" cy="640" r="8.500" fill="#0a7d0a"/><text x="273" y="644.500" style="font-size:11px;fill:#e8f4c0">0</text>
<use href="#cb" x="320" y="634"/><text x="336" y="645" textLength="50" lengthAdjust="spacingAndGlyphs">Warnings</text>
<circle cx="406" cy="640" r="8.500" fill="#0a7d0a"/><text x="403" y="644.500" style="font-size:11px;fill:#e8f4c0">0</text>
<use href="#cb" x="450" y="634"/><text x="466" y="645" textLength="40" lengthAdjust="spacingAndGlyphs">Actions</text>
<use href="#cb" x="552" y="634"/><text x="568" y="645" textLength="26" lengthAdjust="spacingAndGlyphs">Infos</text>
<rect x="653.500" y="630.500" width="72" height="20" rx="4" fill="#fbfbfb" stroke="#d2d2d2"/>
<text x="673" y="645" textLength="33" lengthAdjust="spacingAndGlyphs">Save...</text>
<rect x="572.500" y="673.500" width="81" height="20" rx="4" fill="#fdfdfd" stroke="#0f6c9c"/>
<text x="581" y="688" textLength="63" lengthAdjust="spacingAndGlyphs">Update PCB</text>
<rect x="664.500" y="673.500" width="72" height="20" rx="4" fill="#fbfbfb" stroke="#d2d2d2"/>
<text x="687" y="688" textLength="29" lengthAdjust="spacingAndGlyphs">Close</text>
<path d="M744 691h.1M741 694h.1M744 694h.1M738 697h.1M741 697h.1M744 697h.1" stroke="#aaa" stroke-width="1.500"/>

<!-- red arrow -->
<path d="M636 552L613 661" fill="none" stroke="#e11b3c" stroke-width="5.500" stroke-linecap="round"/>
<path d="M599 643L612 662L636 647" fill="none" stroke="#e11b3c" stroke-width="5.500" stroke-linecap="round" stroke-linejoin="round"/>
</svg>
</body></html>
